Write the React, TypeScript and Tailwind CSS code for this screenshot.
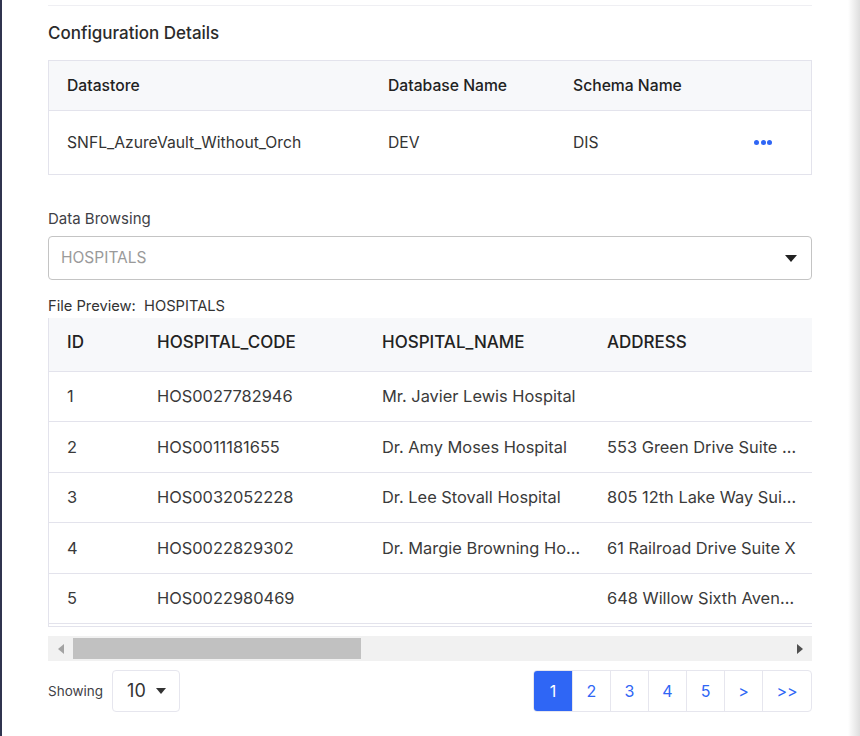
import React from 'react';

type Row = { id: number; code: string; name: string; address: string; city: string; state: string; zip: string; phone: string };

const rows: Row[] = [
  { id: 1, code: 'HOS0027782946', name: 'Mr. Javier Lewis Hospital', address: '', city: 'Lake Anna', state: 'TX', zip: '75201', phone: '555-0142' },
  { id: 2, code: 'HOS0011181655', name: 'Dr. Amy Moses Hospital', address: '553 Green Drive Suite 410', city: 'Port Ryan', state: 'CA', zip: '90012', phone: '555-0199' },
  { id: 3, code: 'HOS0032052228', name: 'Dr. Lee Stovall Hospital', address: '805 12th Lake Way Suite 22', city: 'Newton', state: 'MA', zip: '02458', phone: '555-0110' },
  { id: 4, code: 'HOS0022829302', name: 'Dr. Margie Browning Hospital', address: '61 Railroad Drive Suite X', city: 'Dover', state: 'DE', zip: '19901', phone: '555-0173' },
  { id: 5, code: 'HOS0022980469', name: '', address: '648 Willow Sixth Avenue', city: 'Salem', state: 'OR', zip: '97301', phone: '555-0121' },
];

const headers = ['ID', 'HOSPITAL_CODE', 'HOSPITAL_NAME', 'ADDRESS', 'CITY', 'STATE', 'ZIP_CODE', 'PHONE', 'CREATED_AT'];

const App: React.FC = () => {
  return (
    <div className="flex w-[860px] h-[736px] overflow-hidden bg-white font-['Inter',sans-serif]">
      <div className="w-[2px] shrink-0 bg-[#30344f]" />

      <div className="min-w-0 flex-1 pl-[46px] pr-[36px] pt-[5px]">
        <div className="border-t border-[#efeff3]" />

        {/* Configuration Details */}
        <h2 className="mt-[15px] mb-[15px] text-[17px] font-medium leading-6 text-[#2b2b2b]">Configuration Details</h2>
        <div className="border border-[#e3e3ec]">
          <div className="flex h-[50px] items-center bg-[#f7f8fa] border-b border-[#e3e3ec] text-[15.7px] font-medium text-[#222]">
            <div className="w-[321px] pl-[18px]">Datastore</div>
            <div className="w-[185px] pl-[18px]">Database Name</div>
            <div className="flex-1 pl-[18px]">Schema Name</div>
          </div>
          <div className="flex h-[63px] items-center text-[15.7px] text-[#333]">
            <div className="w-[321px] pl-[18px]">SNFL_AzureVault_Without_Orch</div>
            <div className="w-[185px] pl-[18px]">DEV</div>
            <div className="flex-1 pl-[18px]">DIS</div>
            <div className="flex w-[57px] gap-[1.5px]">
              <span className="h-[5px] w-[5px] rounded-full bg-[#2f66f5]" />
              <span className="h-[5px] w-[5px] rounded-full bg-[#2f66f5]" />
              <span className="h-[5px] w-[5px] rounded-full bg-[#2f66f5]" />
            </div>
          </div>
        </div>

        {/* Data Browsing */}
        <div className="mt-[34px] text-[15px] leading-5 text-[#3f3f46]">Data Browsing</div>
        <div className="mt-[7px] flex h-[44px] items-center justify-between rounded border border-[#c4c4c4] pl-3 pr-[14px]">
          <span className="text-[15.5px] text-[#9a9a9a]">HOSPITALS</span>
          <svg width="12" height="7" viewBox="0 0 12 7">
            <path d="M0 0h12L6 7z" fill="#222" />
          </svg>
        </div>

        <div className="mt-[16px] text-[14.7px] leading-5 text-[#333]">
          File Preview:&nbsp; HOSPITALS
        </div>

        {/* Preview table */}
        <div className="mt-[2px] overflow-hidden border-l border-b border-[#e3e3ec] pb-[2px]">
          <table className="w-[1900px] table-fixed border-collapse">
            <colgroup>
              <col className="w-[90px]" />
              <col className="w-[225px]" />
              <col className="w-[225px]" />
              <col className="w-[225px]" />
              <col className="w-[225px]" />
              <col className="w-[225px]" />
              <col className="w-[225px]" />
              <col className="w-[225px]" />
              <col className="w-[235px]" />
            </colgroup>
            <thead>
              <tr className="h-[53px] bg-[#f7f8fa] border-b border-[#e3e3ec]">
                {headers.map((h) => (
                  <th key={h} className="pl-[18px] pr-[15px] pb-[3px] text-left text-[17px] font-medium text-[#222]">
                    {h}
                  </th>
                ))}
              </tr>
            </thead>
            <tbody>
              {rows.map((r) => (
                <tr key={r.id} className="h-[50.6px] border-b border-[#e3e3ec] text-[16.4px] text-[#3a3a3a]">
                  <td className="pl-[18px] pr-[15px]">{r.id}</td>
                  <td className="pl-[18px] pr-[15px]">{r.code}</td>
                  <td className="truncate pl-[18px] pr-[7px]">{r.name}</td>
                  <td className="truncate pl-[18px] pr-[15px]">{r.address}</td>
                  <td className="truncate pl-[18px] pr-[15px]">{r.city}</td>
                  <td className="truncate pl-[18px] pr-[15px]">{r.state}</td>
                  <td className="truncate pl-[18px] pr-[15px]">{r.zip}</td>
                  <td className="truncate pl-[18px] pr-[15px]">{r.phone}</td>
                  <td className="truncate pl-[18px] pr-[15px]">2023-01-0{r.id}</td>
                </tr>
              ))}
            </tbody>
          </table>
        </div>

        {/* horizontal scrollbar */}
        <div className="mt-[9px] flex h-[25px] items-center bg-[#f1f1f1]">
          <div className="flex w-[25px] justify-center">
            <svg width="6" height="10" viewBox="0 0 6 10">
              <path d="M6 0v10L0 5z" fill="#a3a3a3" />
            </svg>
          </div>
          <div className="flex-1 h-[21px]">
            <div className="h-full w-[288px] bg-[#c1c1c1]" />
          </div>
          <div className="flex w-[25px] justify-center">
            <svg width="6" height="10" viewBox="0 0 6 10">
              <path d="M0 0v10l6-5z" fill="#505050" />
            </svg>
          </div>
        </div>

        {/* footer */}
        <div className="mt-[9px] flex items-center justify-between">
          <div className="flex items-center gap-[9px]">
            <span className="text-[13.5px] text-[#3f3f46]">Showing</span>
            <div className="flex h-[42px] w-[68px] items-center gap-[10px] rounded border border-[#e6e6ee] pl-[14px]">
              <span className="text-lg text-[#333]">10</span>
              <svg width="10" height="6" viewBox="0 0 10 6">
                <path d="M0 0h10L5 6z" fill="#333" />
              </svg>
            </div>
          </div>
          <div className="flex h-[42px] overflow-hidden rounded border border-[#e6e6ee] text-base text-[#2f66f5]">
            <button className="w-[38px] bg-[#2f66f5] text-white">1</button>
            {['2', '3', '4', '5', '>'].map((p) => (
              <button key={p} className="w-[38px] border-l border-[#e6e6ee]">
                {p}
              </button>
            ))}
            <button className="w-[49px] border-l border-[#e6e6ee]">&gt;&gt;</button>
          </div>
        </div>
      </div>

      <div className="w-[12px] shrink-0 bg-gradient-to-r from-white to-[#dedede]" />
    </div>
  );
};

export default App;
